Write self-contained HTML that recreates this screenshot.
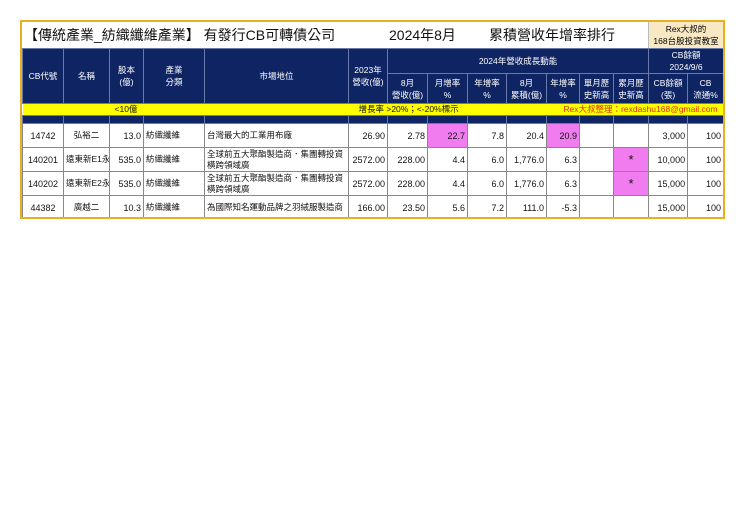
<!DOCTYPE html>
<html><head><meta charset="utf-8"><style>
*{margin:0;padding:0;box-sizing:border-box}
body{width:740px;height:523px;background:#fff;position:relative;font-family:"Liberation Sans","Noto Sans CJK TC",sans-serif;overflow:hidden}
#wrap{position:absolute;left:20px;top:20px;width:705px;height:199px;border:2px solid #e8b020;overflow:hidden}
table{position:absolute;left:0;top:0;border-collapse:collapse;table-layout:fixed;width:701px}
td{border:1px solid #888;font-size:9px;line-height:12px;overflow:hidden;white-space:nowrap;padding:0 2px;color:#111;vertical-align:middle}
.h td{background:#0f2462;color:#fff;text-align:center;border-color:#6a7aa8;line-height:12px;font-size:8.5px}
.r td{height:24px}
.c{text-align:center}.rt{text-align:right}
.pk{background:#f07cf0}
.title{position:absolute;left:0;top:0;height:26px;width:703px;font-size:14px;line-height:26px;color:#111}
.rex{position:absolute;left:626px;top:0;width:75px;height:26px;background:#f8e9c4;border-left:1px solid #bbb;font-size:8.5px;text-align:center;line-height:12px;padding-top:1px}
.s{font-size:8.5px;line-height:11px}
</style></head><body>
<div id="wrap">
<div class="title"><span style="position:absolute;left:2px">【傳統產業_紡織纖維產業】 有發行CB可轉債公司</span><span style="position:absolute;left:367px">2024年8月</span><span style="position:absolute;left:467px">累積營收年增率排行</span></div>
<div class="rex">Rex大叔的<br>168台股投資教室</div>
<table style="top:26px">
<colgroup><col style="width:41px"><col style="width:46px"><col style="width:34px"><col style="width:61px"><col style="width:144px"><col style="width:39px"><col style="width:40px"><col style="width:40px"><col style="width:39px"><col style="width:40px"><col style="width:33px"><col style="width:34px"><col style="width:35px"><col style="width:39px"><col style="width:36px"></colgroup>
<tr class="h" style="height:23px"><td rowspan="2">CB代號</td><td rowspan="2">名稱</td><td rowspan="2">股本<br>(億)</td><td rowspan="2">產業<br>分類</td><td rowspan="2">市場地位</td><td rowspan="2">2023年<br>營收(億)</td><td colspan="7">2024年營收成長動能</td><td colspan="2">CB餘額<br>2024/9/6</td></tr>
<tr class="h" style="height:30px"><td>8月<br>營收(億)</td><td>月增率<br>%</td><td>年增率<br>%</td><td>8月<br>累積(億)</td><td>年增率<br>%</td><td>單月歷<br>史新高</td><td>累月歷<br>史新高</td><td>CB餘額<br>(張)</td><td>CB<br>流通%</td></tr>
<tr style="height:12px;background:#ffff00"><td colspan="5" style="border:none;padding-left:92px;font-size:8.5px;line-height:11px">&lt;10億</td><td colspan="10" style="border:none;font-size:8.5px;line-height:11px"><span style="margin-left:8px">增長率 &gt;20%；&lt;-20%標示</span><span style="float:right;color:#e03000;margin-right:4px">Rex大叔整理：rexdashu168@gmail.com</span></td></tr>
<tr class="h" style="height:8px"><td style="line-height:6px"></td><td></td><td></td><td></td><td></td><td></td><td></td><td></td><td></td><td></td><td></td><td></td><td></td><td></td><td></td></tr>
<tr class="r"><td class="c">14742</td><td class="c s">弘裕二</td><td class="rt">13.0</td><td class="s">紡織纖維</td><td class="s">台灣最大的工業用布廠</td><td class="rt">26.90</td><td class="rt">2.78</td><td class="rt pk">22.7</td><td class="rt">7.8</td><td class="rt">20.4</td><td class="rt pk">20.9</td><td></td><td></td><td class="rt">3,000</td><td class="rt">100</td></tr>
<tr class="r"><td class="c">140201</td><td class="c s">遠東新E1永</td><td class="rt">535.0</td><td class="s">紡織纖維</td><td class="s">全球前五大聚酯製造商．集團轉投資<br>橫跨領域廣</td><td class="rt">2572.00</td><td class="rt">228.00</td><td class="rt">4.4</td><td class="rt">6.0</td><td class="rt">1,776.0</td><td class="rt">6.3</td><td></td><td class="c pk" style="font-size:13px">*</td><td class="rt">10,000</td><td class="rt">100</td></tr>
<tr class="r"><td class="c">140202</td><td class="c s">遠東新E2永</td><td class="rt">535.0</td><td class="s">紡織纖維</td><td class="s">全球前五大聚酯製造商．集團轉投資<br>橫跨領域廣</td><td class="rt">2572.00</td><td class="rt">228.00</td><td class="rt">4.4</td><td class="rt">6.0</td><td class="rt">1,776.0</td><td class="rt">6.3</td><td></td><td class="c pk" style="font-size:13px">*</td><td class="rt">15,000</td><td class="rt">100</td></tr>
<tr class="r"><td class="c">44382</td><td class="c s">廣越二</td><td class="rt">10.3</td><td class="s">紡織纖維</td><td class="s">為國際知名運動品牌之羽絨服製造商</td><td class="rt">166.00</td><td class="rt">23.50</td><td class="rt">5.6</td><td class="rt">7.2</td><td class="rt">111.0</td><td class="rt">-5.3</td><td></td><td></td><td class="rt">15,000</td><td class="rt">100</td></tr>
</table>
</div>
</body></html>
